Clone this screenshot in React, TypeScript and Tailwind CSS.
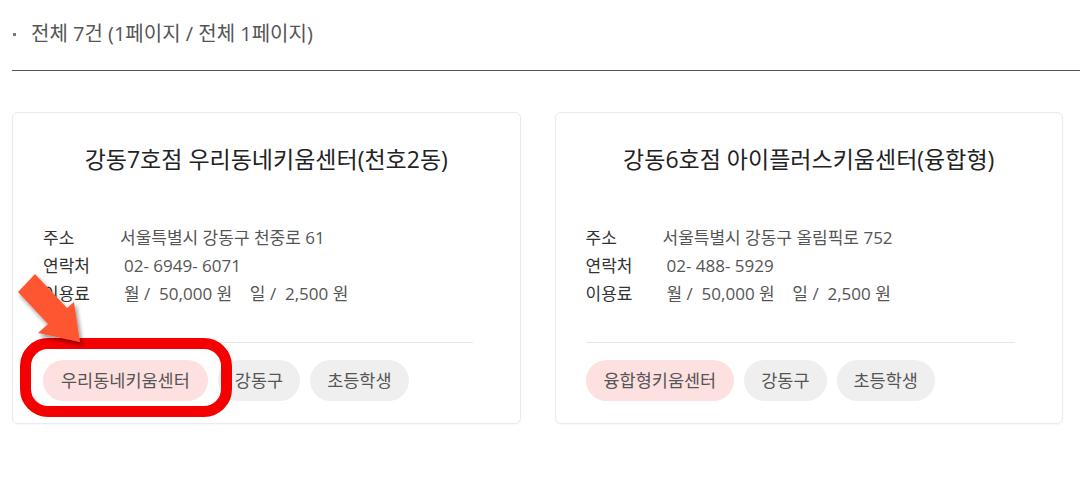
import React from 'react';

type Center = {
    title: string;
    address: string;
    phone: string;
    monthly: string;
    daily: string;
    tags: string[];
};

const centers: Center[] = [
    {
        title: '강동7호점 우리동네키움센터(천호2동)',
        address: '서울특별시 강동구 천중로 61',
        phone: '02- 6949- 6071',
        monthly: '50,000',
        daily: '2,500',
        tags: ['우리동네키움센터', '강동구', '초등학생']
    },
    {
        title: '강동6호점 아이플러스키움센터(융합형)',
        address: '서울특별시 강동구 올림픽로 752',
        phone: '02- 488- 5929',
        monthly: '50,000',
        daily: '2,500',
        tags: ['융합형키움센터', '강동구', '초등학생']
    }
];

const CenterCard: React.FC<{ center: Center }> = ({ center }) => (
    <div className="rounded-md border border-[#ebebeb] bg-white pt-[30px] pb-[22px] shadow-[0_1px_2px_rgba(0,0,0,0.04)]">
        <h3 className="text-center text-[23px] leading-[32px] text-[#222]">{center.title}</h3>
        <div className="pl-[30px] pr-[47px]">
            <dl className="mt-[49px] text-[17px] leading-[28px]">
                <div className="flex">
                    <dt className="w-[77px] text-[#333]">주소</dt>
                    <dd className="text-[#555]">{center.address}</dd>
                </div>
                <div className="flex">
                    <dt className="w-[77px] text-[#333]">연락처</dt>
                    <dd className="pl-[4px] text-[#555]">{center.phone}</dd>
                </div>
                <div className="flex">
                    <dt className="w-[77px] text-[#333]">이용료</dt>
                    <dd className="pl-[4px] whitespace-pre text-[#555]">
                        {`월 /  ${center.monthly} 원    일 /  ${center.daily} 원`}
                    </dd>
                </div>
            </dl>
            <div className="mt-[34px] border-t border-[#e6e6e6]" />
            <div className="mt-[17px] flex gap-[10px]">
                {center.tags.map((tag, i) => (
                    <span
                        key={tag}
                        className={
                            i === 0
                                ? 'flex h-[41px] items-center rounded-full bg-[#fde0e0] px-[18px] text-[17.5px] text-[#555]'
                                : 'flex h-[41px] items-center rounded-full bg-[#efefef] px-[17px] text-[17.5px] text-[#555]'
                        }
                    >
                        {tag}
                    </span>
                ))}
            </div>
        </div>
    </div>
);

const App: React.FC = () => {
    return (
        <div className="relative min-h-[500px] bg-white pl-3 font-['Open_Sans','Noto_Sans_CJK_KR',sans-serif]">
            <div className="flex items-center pt-[22px] text-[20px] leading-[24px] text-[#555]">
                <span className="mr-[15px] ml-[1px] h-[3px] w-[3px] bg-[#777]" />
                <span>전체 7건 (1페이지 / 전체 1페이지)</span>
            </div>
            <div className="mt-[24px] border-t border-[#555]" />

            <div className="mt-[41px] grid w-[1051px] grid-cols-2 gap-[34px]">
                {centers.map((c) => (
                    <CenterCard key={c.title} center={c} />
                ))}
            </div>

            {/* highlight box + arrow annotation */}
            <div className="pointer-events-none absolute top-[338px] left-[20px] h-[79px] w-[212px] rounded-[28px] border-[11px] border-[#f40000]" />
            <svg
                className="pointer-events-none absolute top-0 left-0"
                width="120"
                height="360"
                viewBox="0 0 120 360"
            >
                <defs>
                    <filter id="sh" x="-30%" y="-30%" width="160%" height="160%">
                        <feDropShadow dx="2" dy="3" stdDeviation="2" floodColor="#000" floodOpacity="0.45" />
                    </filter>
                </defs>
                <polygon
                    points="35,274 67,308 74,302 80,342 38,333 48,324 18,292"
                    fill="#ff5733"
                    filter="url(#sh)"
                />
            </svg>
        </div>
    );
};

export default App;
